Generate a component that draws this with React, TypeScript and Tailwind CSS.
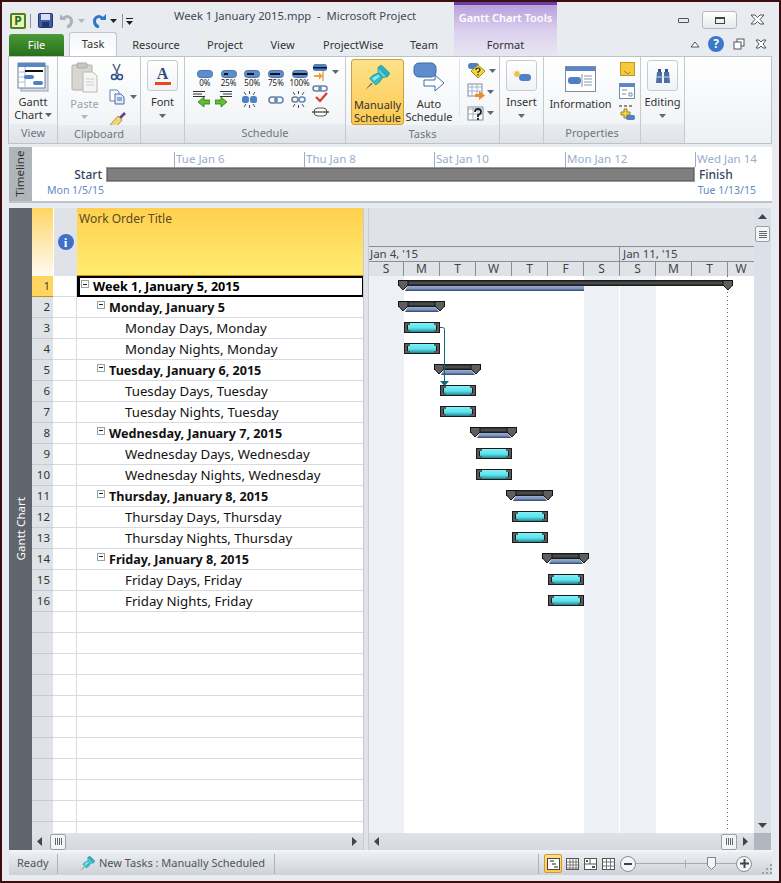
import React from 'react';

type Row = { n: number; level: number; text: string };

const rows: Row[] = [
  { n: 1, level: 0, text: 'Week 1, January 5, 2015' },
  { n: 2, level: 1, text: 'Monday, January 5' },
  { n: 3, level: 2, text: 'Monday Days, Monday' },
  { n: 4, level: 2, text: 'Monday Nights, Monday' },
  { n: 5, level: 1, text: 'Tuesday, January 6, 2015' },
  { n: 6, level: 2, text: 'Tuesday Days, Tuesday' },
  { n: 7, level: 2, text: 'Tuesday Nights, Tuesday' },
  { n: 8, level: 1, text: 'Wednesday, January 7, 2015' },
  { n: 9, level: 2, text: 'Wednesday Days, Wednesday' },
  { n: 10, level: 2, text: 'Wednesday Nights, Wednesday' },
  { n: 11, level: 1, text: 'Thursday, January 8, 2015' },
  { n: 12, level: 2, text: 'Thursday Days, Thursday' },
  { n: 13, level: 2, text: 'Thursday Nights, Thursday' },
  { n: 14, level: 1, text: 'Friday, January 8, 2015' },
  { n: 15, level: 2, text: 'Friday Days, Friday' },
  { n: 16, level: 2, text: 'Friday Nights, Friday' },
];

const emptyRows = Array.from({ length: 11 }, (_, i) => i);

const days = [
  { d: 'S', w: 35 }, { d: 'M', w: 36 }, { d: 'T', w: 36 }, { d: 'W', w: 36 }, { d: 'T', w: 36 }, { d: 'F', w: 36 },
  { d: 'S', w: 36 }, { d: 'S', w: 36 }, { d: 'M', w: 36 }, { d: 'T', w: 36 }, { d: 'W', w: 26 },
];

const Caret = () => (
  <svg width="7" height="4" viewBox="0 0 7 4" className="shrink-0"><path d="M0 0h7L3.500 4z" fill="#5f6770" /></svg>
);

const Pin = ({ size }: { size: number }) => (
  <svg width={size} height={size} viewBox="0 0 70 70">
    <path d="M0 70l18-20 3 3z" fill="#5a6b70" />
    <path d="M13 38Q20 28 37 22L49 36Q42 50 30 56z" fill="#33bdc9" stroke="#1b8794" strokeWidth="2" />
    <path d="M20 38Q26 31 38 27L42 32Q34 36 26 44z" fill="#8beaf0" />
    <path d="M36 7L46 0 70 24 62 33z" fill="#2cb2be" stroke="#1b8794" strokeWidth="2" />
    <path d="M36 18L37 7 62 33 50 35z" fill="#56d3dd" stroke="#1b8794" strokeWidth="2" />
  </svg>
);

const Pct = ({ start, end, label }: { start: number; end: number; label: string }) => (
  <div className="flex w-[23.700px] flex-col items-center">
    <svg width="16" height="8" viewBox="0 0 16 8">
      <rect x=".5" y=".5" width="15" height="7" rx="3" fill="#5f8ccb" stroke="#4a74b2" />
      {end > 0 && <rect x={start} y="3" width={end - start} height="2" fill="#111" />}
    </svg>
    <span className="mt-[1px] text-[8px] leading-[8px] text-[#222]">{label}</span>
  </div>
);

const Link = () => (
  <svg width="16" height="10" viewBox="0 0 16 10">
    <rect x="1" y="2" width="8" height="6" rx="3" fill="none" stroke="#6d7d92" strokeWidth="1.600" />
    <rect x="7" y="2" width="8" height="6" rx="3" fill="none" stroke="#5f86bd" strokeWidth="1.600" />
  </svg>
);

const Burst = ({ children }: { children: React.ReactNode }) => (
  <svg width="17" height="17" viewBox="0 0 17 17">
    <path d="M3 1l2 3M8.500 0v3M14 1l-2 3M3 16l2-3M8.500 17v-3M14 16l-2-3" stroke="#43505f" strokeWidth="1" />
    {children}
  </svg>
);

const Arrow = ({ flip }: { flip?: boolean }) => (
  <svg width="17" height="17" viewBox="0 0 17 17">
    <path d={flip ? 'M5 .500h12M8 3h9M5 5.500h12' : 'M0 .500h12M0 3h9M0 5.500h12'} stroke="#333" strokeWidth="1" />
    <path
      d={flip ? 'M0 9h6V6l6 5-6 5v-3H0z' : 'M17 9h-6V6l-6 5 6 5v-3h6z'}
      fill="#62bd30"
      stroke="#2f7a18"
      strokeWidth=".8"
    />
  </svg>
);

const RibbonBox = ({ children }: { children: React.ReactNode }) => (
  <div className="flex h-[31px] w-[31px] items-center justify-center rounded-[3px] border border-[#c8ccd2] bg-gradient-to-b from-white to-[#f0f2f5]">
    {children}
  </div>
);

const Group = ({ label, w, children }: { label: string; w: string; children: React.ReactNode }) => (
  <div className={`${w} flex shrink-0 flex-col border-r border-[#c5cad1]`}>
    <div className="h-[68px] flex-1">{children}</div>
    <div className="flex h-[19px] items-center justify-center bg-gradient-to-b from-[#e9ecf0] to-[#dfe3e8] text-[#6c7784]">
      {label}
    </div>
  </div>
);

const BoxGroupBody = ({ label, children }: { label: string; children: React.ReactNode }) => (
  <div className="flex flex-col items-center pt-[3px]">
    <RibbonBox>{children}</RibbonBox>
    <span className="mt-[2px] leading-[17px] text-[#333]">{label}</span>
    <div className="mt-[4px]"><Caret /></div>
  </div>
);

const SummaryBar = ({ x1, x2, y, topEnd, botEnd }: { x1: number; x2: number; y: number; topEnd: number; botEnd: number }) => (
  <g>
    <polygon
      points={`${x1 + 10},${y + 5} ${topEnd},${y + 5} ${botEnd},${y + 11} ${x1 + 7},${y + 11}`}
      fill="url(#prog)"
    />
    <rect x={x1} y={y} width={x2 - x1} height={6} fill="url(#sum)" />
    <polygon
      points={`${x1 + .5},${y + .5} ${x1 + 10},${y + .5} ${x1 + 10},${y + 5} ${x1 + 5},${y + 10} ${x1 + .5},${y + 5}`}
      fill="#5e5e5e"
      stroke="#111"
      strokeWidth="1"
    />
    <polygon
      points={`${x2 - 10},${y + .5} ${x2 - .5},${y + .5} ${x2 - .5},${y + 5} ${x2 - 5},${y + 10} ${x2 - 10},${y + 5}`}
      fill="#5e5e5e"
      stroke="#111"
      strokeWidth="1"
    />
  </g>
);

const TaskBar = ({ x, y }: { x: number; y: number }) => (
  <g>
    <rect x={x} y={y} width={36} height={11} fill="#1a1a1a" />
    <rect x={x + 1} y={y + 1} width={2} height={9} fill="#5a5a5a" />
    <rect x={x + 1} y={y + 1} width={5} height={2} fill="#5a5a5a" />
    <rect x={x + 1} y={y + 8} width={5} height={2} fill="#5a5a5a" />
    <rect x={x + 33} y={y + 1} width={2} height={9} fill="#5a5a5a" />
    <rect x={x + 30} y={y + 1} width={5} height={2} fill="#5a5a5a" />
    <rect x={x + 30} y={y + 8} width={5} height={2} fill="#5a5a5a" />
    <rect x={x + 6} y={y + 1} width={24} height={9} fill="url(#task)" />
    <rect x={x + 4} y={y + 3} width={28} height={5} fill="url(#taskMid)" />
  </g>
);

const GanttBody = () => {
  const weeks = [0, 1, 2, 3, 4];
  return (
    <svg width="385" height="557" viewBox="369 276 385 557" className="block bg-white">
      <defs>
        <linearGradient id="task" x1="0" y1="0" x2="0" y2="1">
          <stop offset="0" stopColor="#86eff5" />
          <stop offset=".55" stopColor="#5ce3ec" />
          <stop offset=".8" stopColor="#3fb4bf" />
          <stop offset="1" stopColor="#257c87" />
        </linearGradient>
        <linearGradient id="taskMid" x1="0" y1="0" x2="0" y2="1">
          <stop offset="0" stopColor="#70e9f1" />
          <stop offset=".6" stopColor="#5ce3ec" />
          <stop offset="1" stopColor="#3fb4bf" />
        </linearGradient>
        <linearGradient id="prog" x1="0" y1="0" x2="0" y2="1">
          <stop offset="0" stopColor="#a4b8d8" />
          <stop offset=".65" stopColor="#7590bb" />
          <stop offset="1" stopColor="#2f3f60" />
        </linearGradient>
        <linearGradient id="sum" x1="0" y1="0" x2="0" y2="1">
          <stop offset="0" stopColor="#111" />
          <stop offset=".5" stopColor="#555" />
          <stop offset="1" stopColor="#111" />
        </linearGradient>
      </defs>
      <rect x="369" y="276" width="35" height="557" fill="#edf0f5" />
      <rect x="584" y="276" width="35" height="557" fill="#edf0f5" />
      <rect x="620" y="276" width="36" height="557" fill="#edf0f5" />
      <line x1="727.500" y1="276" x2="727.500" y2="830" stroke="#666" strokeDasharray="1 3" />
      <SummaryBar x1={398} x2={733} y={280} topEnd={584} botEnd={584} />
      {weeks.map((i) => (
        <g key={i}>
          <SummaryBar x1={398 + i * 36} x2={445 + i * 36} y={301 + i * 63} topEnd={435 + i * 36} botEnd={439 + i * 36} />
          <TaskBar x={404 + i * 36} y={322 + i * 63} />
          <TaskBar x={404 + i * 36} y={343 + i * 63} />
        </g>
      ))}
      <path d="M440 327.500h2.500q2 0 2 2V381" fill="none" stroke="#0f6a78" strokeWidth="1" />
      <polygon points="440,381 449,381 444.500,386" fill="#0f6a78" />
    </svg>
  );
};

const ThumbH = () => (
  <div className="flex h-[16px] w-[16px] items-center justify-center gap-[1px] rounded-[2px] border border-[#9aa0a8] bg-[#f3f4f6]">
    {[0, 1, 2, 3].map((i) => <span key={i} className="h-[7px] w-px bg-[#666]" />)}
  </div>
);

const Scroll = ({ thumb }: { thumb: 'left' | 'right' | 'none' }) => (
  <div className="flex h-[17px] items-center justify-between bg-gradient-to-b from-[#dfe3e9] to-[#d5d9e0] pl-[5px] pr-[6px]">
    <div className="flex items-center gap-[8px]">
      <svg width="5" height="9" viewBox="0 0 5 9"><path d="M5 0v9L0 4.500z" fill="#444" /></svg>
      {thumb === 'left' && <ThumbH />}
    </div>
    <div className="flex items-center gap-[6px]">
      {thumb === 'right' && <ThumbH />}
      <svg width="5" height="9" viewBox="0 0 5 9"><path d="M0 0v9l5-4.500z" fill="#444" /></svg>
    </div>
  </div>
);

const CollapseBox = () => (
  <span className="-mt-[7px] mr-[4px] flex h-[8px] w-[8px] shrink-0 items-center justify-center border border-[#9aa0a8] bg-white">
    <span className="h-px w-[4px] bg-[#222]" />
  </span>
);

export default function App() {
  return (
    <div className="flex h-[883px] w-[781px] flex-col overflow-hidden border-2 border-[#3a0d12] bg-[#e8ecf1] pl-[7px] pr-[6px] font-['Noto_Sans',sans-serif] text-[11px] text-[#333]">
      {/* title bar */}
      <div className="flex h-[29px] shrink-0 items-start">
        <div className="flex h-full w-[445px] shrink-0 items-center">
          <div className="ml-[1px] mt-[8px] flex h-[16px] w-[16px] items-center justify-center rounded-[2px] border-2 border-[#4f7f1e] bg-[#e8f4b4]">
            <span className="text-[12px] font-bold leading-[12px] text-[#2c6b16]">P</span>
          </div>
          <span className="ml-[4px] mt-[8px] h-[14px] w-px bg-[#8a929c]" />
          <svg width="15" height="15" viewBox="0 0 15 15" className="ml-[7px] mt-[8px]">
            <rect x=".5" y=".5" width="14" height="14" rx="1" fill="#3d5ea8" stroke="#26356b" />
            <rect x="3" y="1" width="9" height="6" fill="#d6e0f2" />
            <rect x="4" y="9" width="7" height="5" fill="#26356b" />
          </svg>
          <svg width="14" height="14" viewBox="0 0 14 14" className="ml-[7px] mt-[8px]">
            <path d="M7 13C12 12 13 5 9 3C7 2 4 3 3 5" fill="none" stroke="#aab2bc" strokeWidth="3" />
            <path d="M0 0V6H6z" fill="#aab2bc" />
          </svg>
          <div className="ml-[4px] mt-[8px]">
            <svg width="7" height="4" viewBox="0 0 7 4"><path d="M0 0h7L3.500 4z" fill="#b0b6bd" /></svg>
          </div>
          <svg width="14" height="14" viewBox="0 0 14 14" className="ml-[7px] mt-[8px]">
            <path d="M7 13C2 12 1 5 5 3C7 2 10 3 11 5" fill="none" stroke="#2f78c4" strokeWidth="3" />
            <path d="M14 0V6H8z" fill="#2f78c4" />
          </svg>
          <div className="ml-[4px] mt-[8px]">
            <svg width="7" height="4" viewBox="0 0 7 4"><path d="M0 0h7L3.500 4z" fill="#222" /></svg>
          </div>
          <span className="ml-[5px] mt-[8px] h-[14px] w-px bg-[#8a929c]" />
          <svg width="7" height="7" viewBox="0 0 7 7" className="ml-[3px] mt-[10px]"><path d="M0 0h7v1H0zM0 3h7L3.500 7z" fill="#222" /></svg>
          <span className="ml-[41px] whitespace-pre text-[11.250px] text-[#3f4853]">Week 1 January 2015.mpp  -  Microsoft Project</span>
        </div>
        <div className="flex h-full w-[103px] shrink-0 justify-center border-t-[3px] border-[#6b3fa0] bg-gradient-to-b from-[#b99fdc] to-[#dcd0ee] pt-[5px] font-semibold text-white">
          Gantt Chart Tools
        </div>
        <div className="flex h-full flex-1 items-start justify-end pt-[9px]">
          <span className="mr-[13px] mt-[7px] h-[5px] w-[11px] rounded-[1px] border border-[#555]" />
          <div className="mr-[13px] flex h-[18px] w-[35px] items-center justify-center rounded-[3px] border border-[#b4bac2] bg-gradient-to-b from-white to-[#e6e9ee]">
            <span className="h-[7px] w-[10px] border border-t-2 border-[#444]" />
          </div>
          <svg width="15" height="11" viewBox="0 0 15 11" className="mr-[8px] mt-[3px]">
            <path d="M1 1h4l2.500 2.500L10 1h4L10 5.500 14 10h-4L7.500 7.500 5 10H1l4-4.500z" fill="#fff" stroke="#555" />
          </svg>
        </div>
      </div>

      {/* tabs */}
      <div className="relative z-10 flex h-[25px] shrink-0 items-end">
        <div className="flex h-[22px] w-[55px] items-center justify-center rounded-t-[3px] bg-gradient-to-b from-[#4a9a35] to-[#27701c] text-white">File</div>
        <div className="ml-[5px] flex h-[24px] w-[48px] items-center justify-center rounded-t-[3px] border border-b-0 border-[#c2c7ce] bg-gradient-to-b from-[#f4f6f8] to-white text-[#333]">Task</div>
        <span className="ml-[15px] h-[22px] w-[48px] text-center leading-[22px]">Resource</span>
        <span className="ml-[27px] h-[22px] w-[35px] text-center leading-[22px]">Project</span>
        <span className="ml-[28px] h-[22px] w-[25px] text-center leading-[22px]">View</span>
        <span className="ml-[28px] h-[22px] w-[60px] text-center leading-[22px]">ProjectWise</span>
        <span className="ml-[27px] h-[22px] w-[27px] text-center leading-[22px]">Team</span>
        <div className="ml-[17px] flex h-[25px] w-[103px] items-center justify-center bg-gradient-to-b from-[#dcd0ee] to-[#e8e6f2] pt-[3px]">Format</div>
        <div className="flex h-[25px] flex-1 items-center justify-end pt-[1px]">
          <svg width="10" height="7" viewBox="0 0 10 7" className="mr-[8px]"><path d="M1 6l4-5 4 5z" fill="#fff" stroke="#555" /></svg>
          <div className="mr-[9px] flex h-[16px] w-[16px] items-center justify-center rounded-full bg-[#3a79c8] text-[12px] font-bold leading-none text-white">?</div>
          <svg width="12" height="12" viewBox="0 0 12 12" className="mr-[10px]">
            <rect x="4" y="1" width="7" height="7" fill="#fff" stroke="#555" />
            <rect x="1" y="4" width="7" height="7" fill="#fff" stroke="#555" />
          </svg>
          <svg width="12" height="10" viewBox="0 0 12 10" className="mr-[6px]">
            <path d="M1 1h3l2 2 2-2h3L8 5l3 4H8L6 7 4 9H1l3-4z" fill="#fff" stroke="#555" />
          </svg>
        </div>
      </div>

      {/* ribbon */}
      <div className="-ml-[1px] mr-[1px] flex h-[88px] shrink-0 border border-[#bcc2ca] bg-gradient-to-b from-white to-[#eef1f4]">
        <Group label="View" w="w-[49px]">
          <div className="flex flex-col items-center pt-[5px]">
            <svg width="32" height="30" viewBox="0 0 32 30">
              <rect x="4" y="4" width="27" height="25" fill="#d7dde6" stroke="#9aa4b0" />
              <rect x="1" y="1" width="27" height="25" fill="#fff" stroke="#6e7f94" />
              <rect x="1" y="1" width="27" height="4" fill="#5a86c8" />
              <path d="M8 5v21M1 10h7M1 15h7M1 20h7" stroke="#a9bfdd" />
              <rect x="8" y="8" width="18" height="2" fill="#111" />
              <rect x="7" y="13" width="10" height="4" rx="2" fill="#4f7fc4" />
              <rect x="16" y="19" width="10" height="4" rx="2" fill="#4f7fc4" />
            </svg>
            <span className="mt-[3px] leading-[13px]">Gantt</span>
            <span className="flex items-center gap-[2px] leading-[13px]">Chart <Caret /></span>
          </div>
        </Group>
        <Group label="Clipboard" w="w-[83px]">
          <div className="flex pt-[5px]">
            <div className="ml-[11px] flex w-[31px] flex-col items-center">
              <svg width="27" height="31" viewBox="0 0 27 31">
                <rect x="1" y="3" width="20" height="25" rx="1" fill="#d9d6d2" stroke="#b3afaa" />
                <rect x="6" y="1" width="10" height="5" rx="1" fill="#c9c6c2" stroke="#aaa" />
                <path d="M12 10h10l4 4v16H12z" fill="#f4f4f4" stroke="#b8b8b8" />
                <path d="M15 17h8M15 20h8M15 23h8" stroke="#d0d0d0" />
              </svg>
              <span className="mt-[3px] leading-[16px] text-[#9aa0a8]">Paste</span>
              <div className="mt-[3px]"><svg width="7" height="4" viewBox="0 0 7 4"><path d="M0 0h7L3.500 4z" fill="#b0b5bb" /></svg></div>
            </div>
            <div className="ml-[9px] flex flex-col gap-[8px]">
              <svg width="14" height="18" viewBox="0 0 14 18" className="ml-[1px] mt-[1px]">
                <path d="M3 1l5 10M10 1L6 11" stroke="#5d6b80" strokeWidth="1.600" />
                <circle cx="4" cy="14" r="2.500" fill="none" stroke="#2e4f88" strokeWidth="1.500" />
                <circle cx="10" cy="14" r="2.500" fill="none" stroke="#2e4f88" strokeWidth="1.500" />
              </svg>
              <div className="flex items-center gap-[5px]">
                <svg width="16" height="16" viewBox="0 0 16 16">
                  <path d="M1 1h7l2 2v9H1z" fill="#fff" stroke="#5c7fb0" />
                  <path d="M6 5h6l3 3v7H6z" fill="#dfeafa" stroke="#4a6ea5" />
                  <path d="M8 9h5M8 11h5" stroke="#4a6ea5" />
                </svg>
                <Caret />
              </div>
              <svg width="17" height="15" viewBox="0 0 17 15" className="-mt-[1px]">
                <path d="M10 5l5-5 2 2-5 5z" fill="#5b4a8a" />
                <path d="M9 4l4 4-5 6-7-1z" fill="#f0d778" stroke="#b5963a" />
              </svg>
            </div>
          </div>
        </Group>
        <Group label="" w="w-[44px]">
          <BoxGroupBody label="Font">
            <div className="flex flex-col items-center">
              <span className="font-['Liberation_Serif',serif] text-[16px] font-bold leading-[14px] text-[#2d4a80]">A</span>
              <span className="mt-[1px] h-[3px] w-[16px] bg-[#e8481c]" />
            </div>
          </BoxGroupBody>
        </Group>
        <Group label="Schedule" w="w-[161px]">
          <div className="flex pl-[8px]">
            <div className="flex w-[119px] flex-col pt-[13px]">
              <div className="flex">
                <Pct start={0} end={0} label="0%" />
                <Pct start={3} end={7} label="25%" />
                <Pct start={3} end={10} label="50%" />
                <Pct start={2} end={12} label="75%" />
                <Pct start={1} end={15} label="100%" />
              </div>
              <div className="mt-[4px] flex items-center">
                <Arrow />
                <div className="ml-[5px]"><Arrow flip /></div>
                <div className="ml-[9px]">
                  <Burst><rect x="1" y="5" width="7" height="7" rx="2.500" fill="#4f7fc4" /><rect x="9" y="5" width="7" height="7" rx="2.500" fill="#4f7fc4" /></Burst>
                </div>
                <div className="ml-[10px]"><Link /></div>
                <div className="ml-[6px]"><Burst><rect x="2" y="6" width="6" height="5" rx="2.500" fill="none" stroke="#6d7d92" strokeWidth="1.500" /><rect x="9" y="6" width="6" height="5" rx="2.500" fill="none" stroke="#5f86bd" strokeWidth="1.500" /></Burst></div>
              </div>
            </div>
            <div className="flex flex-col gap-[4px] pt-[6px]">
              <div className="flex items-center gap-[3px]">
                <svg width="17" height="18" viewBox="0 0 17 18">
                  <rect x="1" y="1" width="14" height="7" rx="2.500" fill="#4f7fc4" />
                  <rect x="1" y="4" width="14" height="1.500" fill="#111" />
                  <path d="M11 8v10" stroke="#e07820" />
                  <path d="M2 12h5V9.500l4 3.500-4 3.500V14H2z" fill="#f0a030" />
                </svg>
                <Caret />
              </div>
              <svg width="17" height="18" viewBox="0 0 17 18">
                <rect x="1" y="1" width="8" height="5" rx="2.500" fill="none" stroke="#6d7d92" strokeWidth="1.500" />
                <rect x="7" y="1" width="8" height="5" rx="2.500" fill="none" stroke="#5f86bd" strokeWidth="1.500" />
                <path d="M4 12l4 4 7-8" fill="none" stroke="#d8392a" strokeWidth="2.200" />
              </svg>
              <svg width="17" height="10" viewBox="0 0 17 10">
                <rect x="2" y="1" width="13" height="8" rx="4" fill="#fff" stroke="#555" />
                <path d="M0 5h17" stroke="#111" />
              </svg>
            </div>
          </div>
        </Group>
        <Group label="Tasks" w="w-[154px]">
          <div className="flex pl-[5px] pt-[2px]">
            <div className="flex h-[66px] w-[53px] flex-col items-center rounded-[3px] border border-[#c8a13a] bg-gradient-to-b from-[#fde28a] to-[#fcc94e] pt-[5px]">
              <Pin size={25} />
              <span className="mt-[8px] leading-[13px]">Manually</span>
              <span className="leading-[13px]">Schedule</span>
            </div>
            <div className="flex w-[50px] flex-col items-center pt-[3px]">
              <svg width="32" height="31" viewBox="0 0 32 31">
                <rect x="1" y="1" width="22" height="14" rx="5" fill="#5f8ccb" stroke="#3f6aa8" />
                <path d="M11 18h11v-5l9 8-9 8v-5H11z" fill="#fff" stroke="#3f6aa8" />
              </svg>
              <span className="mt-[4px] leading-[13px]">Auto</span>
              <span className="leading-[13px]">Schedule</span>
            </div>
            <div className="ml-[5px] h-[57px] border-l border-[#dfe2e6]" />
            <div className="ml-[7px] flex flex-col gap-[3px] pt-[3px]">
              <div className="flex items-center gap-[3px]">
                <svg width="19" height="18" viewBox="0 0 19 18">
                  <rect x="1" y="1" width="11" height="6" rx="3" fill="#4f7fc4" />
                  <path d="M11 3l7 6-7 7-7-7z" fill="#f4d53c" stroke="#a88a10" />
                  <path d="M9 8q0-2 2-2t2 2q0 1-2 2v1M11 12v1.500" fill="none" stroke="#222" strokeWidth="1.200" />
                </svg>
                <Caret />
              </div>
              <div className="flex items-center gap-[1px]">
                <svg width="19" height="18" viewBox="0 0 19 18">
                  <rect x="1" y="1" width="14" height="12" fill="#fff" stroke="#7d8ca0" />
                  <path d="M1 4h14M1 8h14M5 1v12M10 1v12" stroke="#9fb2cc" />
                  <path d="M8 11h4V8l6 4.500-6 4.500v-3H8z" fill="#ee8a2e" />
                </svg>
                <Caret />
              </div>
              <div className="flex items-center gap-[1px]">
                <svg width="19" height="17" viewBox="0 0 19 17">
                  <rect x="1" y="3" width="15" height="13" fill="#fff" stroke="#7d8ca0" />
                  <path d="M1 5h15M6 3v13M11 3v13M1 10h15" stroke="#9fb2cc" />
                  <path d="M8 8q0-3 3-3t3 3q0 2-3 3v2M11 14v2" fill="none" stroke="#222" strokeWidth="1.800" />
                </svg>
                <Caret />
              </div>
            </div>
          </div>
        </Group>
        <Group label="" w="w-[44px]">
          <BoxGroupBody label="Insert">
            <svg width="18" height="14" viewBox="0 0 18 14">
              <path d="M4 1l1 2 2-1-1 2 2 1-2 1 1 2-2-1-1 2-1-2-2 1 1-2-2-1 2-1-1-2 2 1z" fill="#f0c040" />
              <rect x="6" y="5" width="12" height="7" rx="3.500" fill="#4f7fc4" />
            </svg>
          </BoxGroupBody>
        </Group>
        <Group label="Properties" w="w-[97px]">
          <div className="flex pt-[5px]">
            <div className="flex w-[73px] flex-col items-center">
              <svg width="32" height="27" viewBox="0 0 32 27" className="mt-[4px]">
                <rect x=".5" y=".5" width="30" height="25" fill="#fff" stroke="#7d8ca0" />
                <rect x="1" y="1" width="29" height="4" fill="#5a86c8" />
                <rect x="3" y="11" width="13" height="7" rx="3" fill="#4f7fc4" />
                <path d="M19 10h8M19 13h8M19 16h8M19 19h8M17 8v13" stroke="#8a98aa" />
              </svg>
              <span className="mt-[3px] leading-[16px]">Information</span>
            </div>
            <div className="flex flex-col items-center gap-[6px] pl-[2px]">
              <svg width="15" height="15" viewBox="0 0 15 15"><rect x=".5" y=".5" width="14" height="13" fill="#f5c93c" stroke="#b99a2a" /><path d="M4 9l4 3 2-2" stroke="#a5802a" fill="none" /></svg>
              <svg width="16" height="16" viewBox="0 0 16 16"><rect x=".5" y=".5" width="15" height="15" fill="#fff" stroke="#6d8ab0" /><rect x="1" y="1" width="14" height="3" fill="#5a86c8" /><path d="M3 7h5M3 11h4M10 10h3v3h-3z" stroke="#7d8ca0" fill="none" /></svg>
              <svg width="16" height="16" viewBox="0 0 16 16"><path d="M0 1h3M5 1h3M10 1h3" stroke="#222" /><path d="M5 4h3v3h3v3H8v3H5v-3H2V7h3z" fill="#ecd24a" stroke="#9d8520" /><rect x="7" y="10" width="9" height="5" rx="2" fill="#4f7fc4" /></svg>
            </div>
          </div>
        </Group>
        <Group label="" w="w-[44px]">
          <BoxGroupBody label="Editing">
            <svg width="16" height="16" viewBox="0 0 16 16">
              <path d="M3 1h3v3H3zM10 1h3v3h-3z" fill="#33527f" />
              <path d="M2 4h5v11H1zM9 4h5l1 11H9z" fill="#4a6fa5" />
              <path d="M2 9h13" stroke="#c9d6ea" />
            </svg>
          </BoxGroupBody>
        </Group>
        <div className="flex-1" />
      </div>

      {/* timeline */}
      <div className="mr-[1px] mt-[3px] flex h-[56px] shrink-0 border-b-2 border-[#bfc4cb]">
        <div className="flex w-[23px] shrink-0 items-center justify-center bg-[#b0b5bb] text-[#333]">
          <span className="-rotate-90 text-[11.500px]">Timeline</span>
        </div>
        <div className="flex flex-1 flex-col bg-white">
          <div className="flex h-[20px] items-end pl-[142px] text-[11.500px] text-[#9aadca]">
            <span className="h-[15px] w-[130px] border-l border-[#9aadca] pl-[1px] leading-[13px]">Tue Jan 6</span>
            <span className="h-[15px] w-[130px] border-l border-[#9aadca] pl-[1px] leading-[13px]">Thu Jan 8</span>
            <span className="h-[15px] w-[131px] border-l border-[#9aadca] pl-[1px] leading-[13px]">Sat Jan 10</span>
            <span className="h-[15px] w-[130px] border-l border-[#9aadca] pl-[1px] leading-[13px]">Mon Jan 12</span>
            <span className="h-[15px] border-l border-[#9aadca] pl-[1px] leading-[13px]">Wed Jan 14</span>
          </div>
          <div className="flex h-[15px] items-center">
            <span className="w-[70px] text-right text-[12px] font-medium text-[#33475b]">Start</span>
            <div className="ml-[4px] h-[15px] w-[589px] border-2 border-[#9a9a9a] bg-[#7f7f7f] outline outline-1 -outline-offset-2 outline-[#666]" />
            <span className="ml-[4px] text-[12px] font-medium text-[#33475b]">Finish</span>
          </div>
          <div className="flex h-[17px] items-center justify-between pl-[15px] pr-[16px] text-[10.500px] text-[#5f8bc2]">
            <span>Mon 1/5/15</span>
            <span>Tue 1/13/15</span>
          </div>
        </div>
      </div>

      {/* main */}
      <div className="mt-[5px] flex h-[644px] shrink-0 border-b-2 border-[#f2f4f7]">
        <div className="flex w-[23px] shrink-0 items-center justify-center bg-[#60646c]">
          <span className="-rotate-90 whitespace-nowrap text-[11.600px] text-white">Gantt Chart</span>
        </div>
        <div className="flex w-[331px] shrink-0 flex-col overflow-hidden">
          <div className="flex h-[68px] shrink-0">
            <div className="w-[21px] bg-gradient-to-b from-[#ffd55f] to-[#fffaf0]" />
            <div className="flex w-[24px] items-center justify-center border-l border-white bg-[#dfe3e8]">
              <div className="flex h-[16px] w-[16px] items-center justify-center rounded-full bg-[#3f6fc7] font-['Liberation_Serif',serif] text-[13px] font-bold leading-none text-white">i</div>
            </div>
            <div className="flex-1 border-b border-[#c78e20] bg-gradient-to-b from-[#ffd04f] to-[#ffec70] pl-[2px] pt-[2px] text-[12px] text-[#5c4a20]">Work Order Title</div>
          </div>
          <div className="flex-1 overflow-hidden bg-white">
            {rows.map((r) => (
              <div key={r.n} className="flex h-[21px]">
                <div className={`flex w-[21px] items-center justify-end border-b pr-[3px] text-[11.500px] ${r.n === 1 ? 'border-[#c78e20] bg-[#ffd55f] text-[#444]' : 'border-[#c8ccd2] bg-[#dfe3e8] text-[#333]'}`}>
                  {r.n}
                </div>
                <div className="w-[24px] border-b border-r border-[#d8dbe0]" />
                {r.n === 1 ? (
                  <div className="flex flex-1 items-center border-y-2 border-l-[3px] border-r border-black pl-[1px] pt-[2px] text-[12.600px] font-bold leading-none text-black">
                    <CollapseBox />
                    {r.text}
                  </div>
                ) : (
                  <div className={`flex flex-1 items-center border-b border-[#d8dbe0] pt-[2px] leading-none text-[#111] ${r.level === 1 ? 'pl-[20px] text-[12.600px] font-bold' : 'pl-[48px] text-[13.250px]'}`}>
                    {r.level === 1 && <CollapseBox />}
                    {r.text}
                  </div>
                )}
              </div>
            ))}
            {emptyRows.map((i) => (
              <div key={i} className="flex h-[21px]">
                <div className="w-[21px] border-b border-[#c8ccd2] bg-[#dfe3e8]" />
                <div className="w-[24px] border-b border-r border-[#d8dbe0]" />
                <div className="flex-1 border-b border-[#d8dbe0]" />
              </div>
            ))}
          </div>
          <Scroll thumb="left" />
        </div>
        <div className="w-[6px] shrink-0 border-x border-[#c8ccd2] bg-[#dfe3e8]" />
        <div className="flex w-[385px] shrink-0 flex-col overflow-hidden">
          <div className="h-[38px] shrink-0 bg-[#dfe3e8]" />
          <div className="flex h-[15px] shrink-0 border-t border-[#8a8f96] bg-[#dfe3e8] text-[11.500px] leading-[14px] text-[#444]">
            <span className="w-[251px] border-r border-[#8a8f96] pl-[1px]">Jan 4, '15</span>
            <span className="flex-1 pl-[3px]">Jan 11, '15</span>
          </div>
          <div className="flex h-[15px] shrink-0 border-t border-[#8a8f96] bg-[#dfe3e8] text-[12px] leading-[14px] text-[#444]">
            {days.map((x, i) => (
              <span key={i} style={{ width: x.w }} className="shrink-0 border-r border-[#8a8f96] text-center last:border-r-0">{x.d}</span>
            ))}
          </div>
          <GanttBody />
          <div className="shrink-0">
            <Scroll thumb="right" />
          </div>
        </div>
        <div className="flex w-[17px] shrink-0 flex-col bg-[#dce1e9]">
          <div className="flex h-[15px] items-center justify-center pt-[2px]">
            <svg width="9" height="5" viewBox="0 0 9 5"><path d="M4.500 0L9 5H0z" fill="#444" /></svg>
          </div>
          <div className="mx-auto mt-[3px] flex h-[16px] w-[15px] flex-col items-center justify-center gap-px rounded-[2px] border border-[#9aa0a8] bg-[#f3f4f6]">
            {[0, 1, 2, 3].map((i) => <span key={i} className="h-px w-[8px] bg-[#666]" />)}
          </div>
          <div className="flex-1" />
          <div className="flex h-[16px] items-center justify-center">
            <svg width="9" height="5" viewBox="0 0 9 5"><path d="M0 0h9L4.500 5z" fill="#444" /></svg>
          </div>
          <div className="h-[17px] bg-[#b2b6be]" />
        </div>
      </div>

      {/* status bar */}
      <div className="mr-[1px] flex h-[23px] shrink-0 items-center bg-gradient-to-b from-[#eceff3] to-[#ced2d8] text-[#4c5560]">
        <span className="w-[38px] pl-[8px]">Ready</span>
        <span className="ml-[10px] h-[20px] border-l border-[#aeb3ba]" />
        <div className="ml-[22px]"><Pin size={15} /></div>
        <span className="ml-[4px]">New Tasks : Manually Scheduled</span>
        <span className="ml-[9px] h-[20px] border-l border-[#aeb3ba]" />
        <div className="flex-1" />
        <span className="h-[20px] border-l border-[#aeb3ba]" />
        <div className="ml-[5px] flex h-[19px] w-[18px] items-center justify-center rounded-[2px] border border-[#d49a2a] bg-gradient-to-b from-[#fde28a] to-[#fcc94e]">
          <svg width="13" height="12" viewBox="0 0 13 12"><rect x=".5" y=".5" width="12" height="11" fill="#fff" stroke="#444" /><path d="M3 3h4M5 6h4M7 9h4" stroke="#222" /></svg>
        </div>
        <svg width="13" height="12" viewBox="0 0 13 12" className="ml-[4px]"><rect x=".5" y=".5" width="12" height="11" fill="#fff" stroke="#555" /><path d="M4 .5v11M7 .5v11M10 .5v11M.5 4h12M.5 7h12M.5 10h12" stroke="#777" /></svg>
        <svg width="13" height="12" viewBox="0 0 13 12" className="ml-[5px]"><rect x=".5" y=".5" width="12" height="11" fill="#fff" stroke="#555" /><path d="M.5 6h12M6 .5v5.500" stroke="#555" /><rect x="2" y="2" width="2" height="2" fill="#555" /><rect x="8" y="8" width="3" height="2" fill="#555" /></svg>
        <svg width="13" height="12" viewBox="0 0 13 12" className="ml-[5px]"><rect x=".5" y=".5" width="12" height="11" fill="#fff" stroke="#555" /><path d="M4.500 .5v11M8.500 .5v11M.5 4h12M.5 8h12" stroke="#777" /></svg>
        <div className="ml-[5px] flex h-[16px] w-[16px] items-center justify-center rounded-full border border-[#8a8f96] bg-[#f4f5f7]"><span className="h-[2px] w-[8px] bg-[#444]" /></div>
        <div className="relative flex h-[16px] w-[100px] items-center">
          <span className="h-px w-full bg-[#a5abb3]" />
          <span className="absolute left-[49px] top-[4px] h-[8px] w-px bg-[#a5abb3]" />
          <svg width="9" height="13" viewBox="0 0 9 13" className="absolute left-[71px] top-[1px]"><path d="M.5.500h8v8l-4 4-4-4z" fill="#f4f5f7" stroke="#7d838b" /></svg>
        </div>
        <div className="flex h-[16px] w-[16px] items-center justify-center rounded-full border border-[#8a8f96] bg-[#f4f5f7]"><svg width="9" height="9" viewBox="0 0 9 9"><path d="M3.500 0h2v3.500H9v2H5.500V9h-2V5.500H0v-2h3.500z" fill="#444" /></svg></div>
        <svg width="10" height="10" viewBox="0 0 10 10" className="ml-[10px] mt-[10px]"><path d="M8 0h2v2H8zM4 4h2v2H4zM8 4h2v2H8zM0 8h2v2H0zM4 8h2v2H4zM8 8h2v2H8z" fill="#9aa0a8" /></svg>
      </div>
    </div>
  );
}
